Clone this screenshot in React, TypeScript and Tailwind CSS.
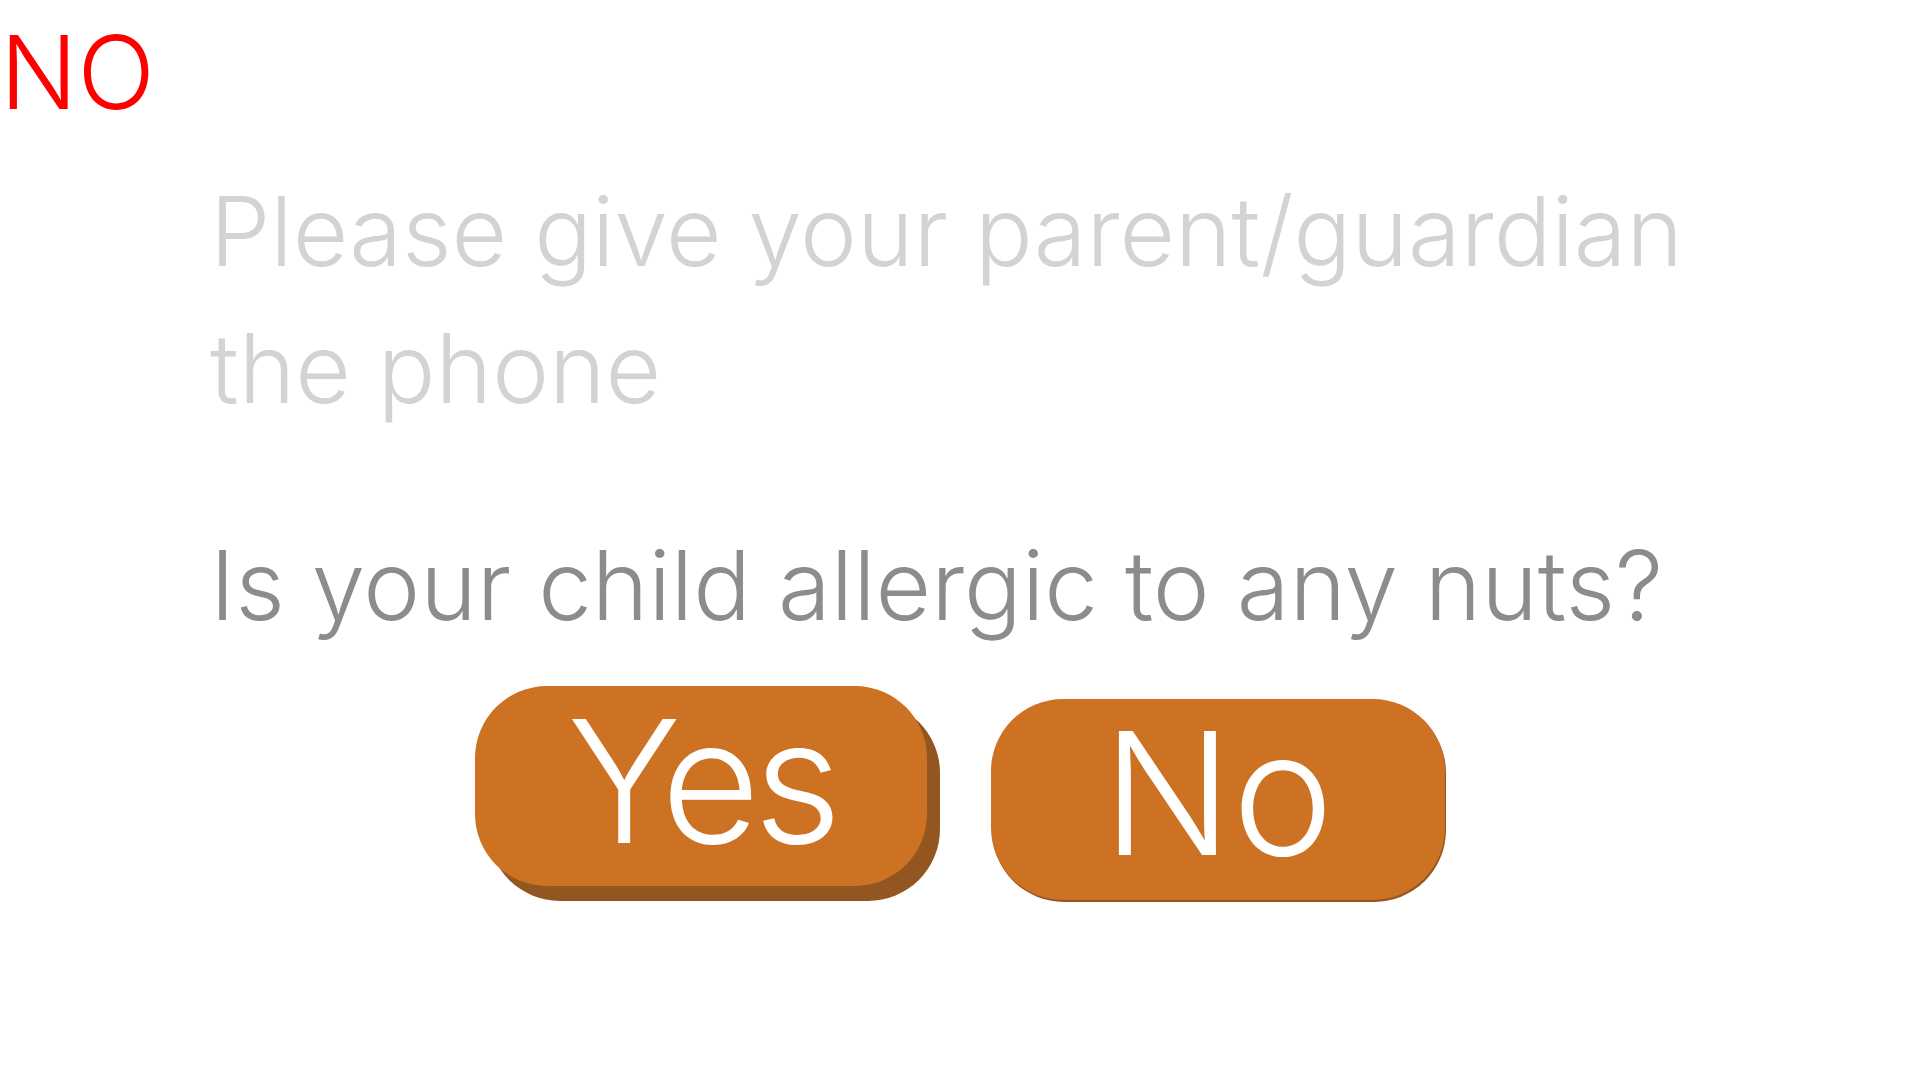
export default function App() {
  return (
    <div className="relative h-[1080px] w-[1920px] overflow-hidden bg-white font-['Inter','Liberation_Sans',sans-serif] font-light">
      {/* status flag */}
      <div className="pt-[12px] text-[102px] leading-[120px] text-[#ff0000]">NO</div>

      <div className="pl-[210px] pt-[31px]">
        <p className="text-[96px] leading-[137px] text-[#d3d3d3]">
          Please give your parent/guardian
          <br />
          the phone
        </p>
        <p className="mt-[80px] text-[96px] leading-[137px] text-[#8c8c8c]">
          Is your child allergic to any nuts?
        </p>
      </div>

      <div className="mt-[32px] flex gap-[64px] pl-[475px]">
        {/* Yes: raised */}
        <button className="flex h-[200px] w-[452px] items-center justify-center rounded-[72px] bg-[#cd7122] pb-[12px] text-[171px] leading-none tracking-[-0.04em] text-white shadow-[13px_15px_0_0_#945621]">
          Yes
        </button>
        {/* No: pressed */}
        <button className="mt-[13px] flex h-[201px] w-[454px] items-center justify-center rounded-[72px] bg-[#cd7122] pb-[14px] text-[171px] leading-none text-white shadow-[1px_2px_0_0_#945621]">
          No
        </button>
      </div>
    </div>
  )
}
